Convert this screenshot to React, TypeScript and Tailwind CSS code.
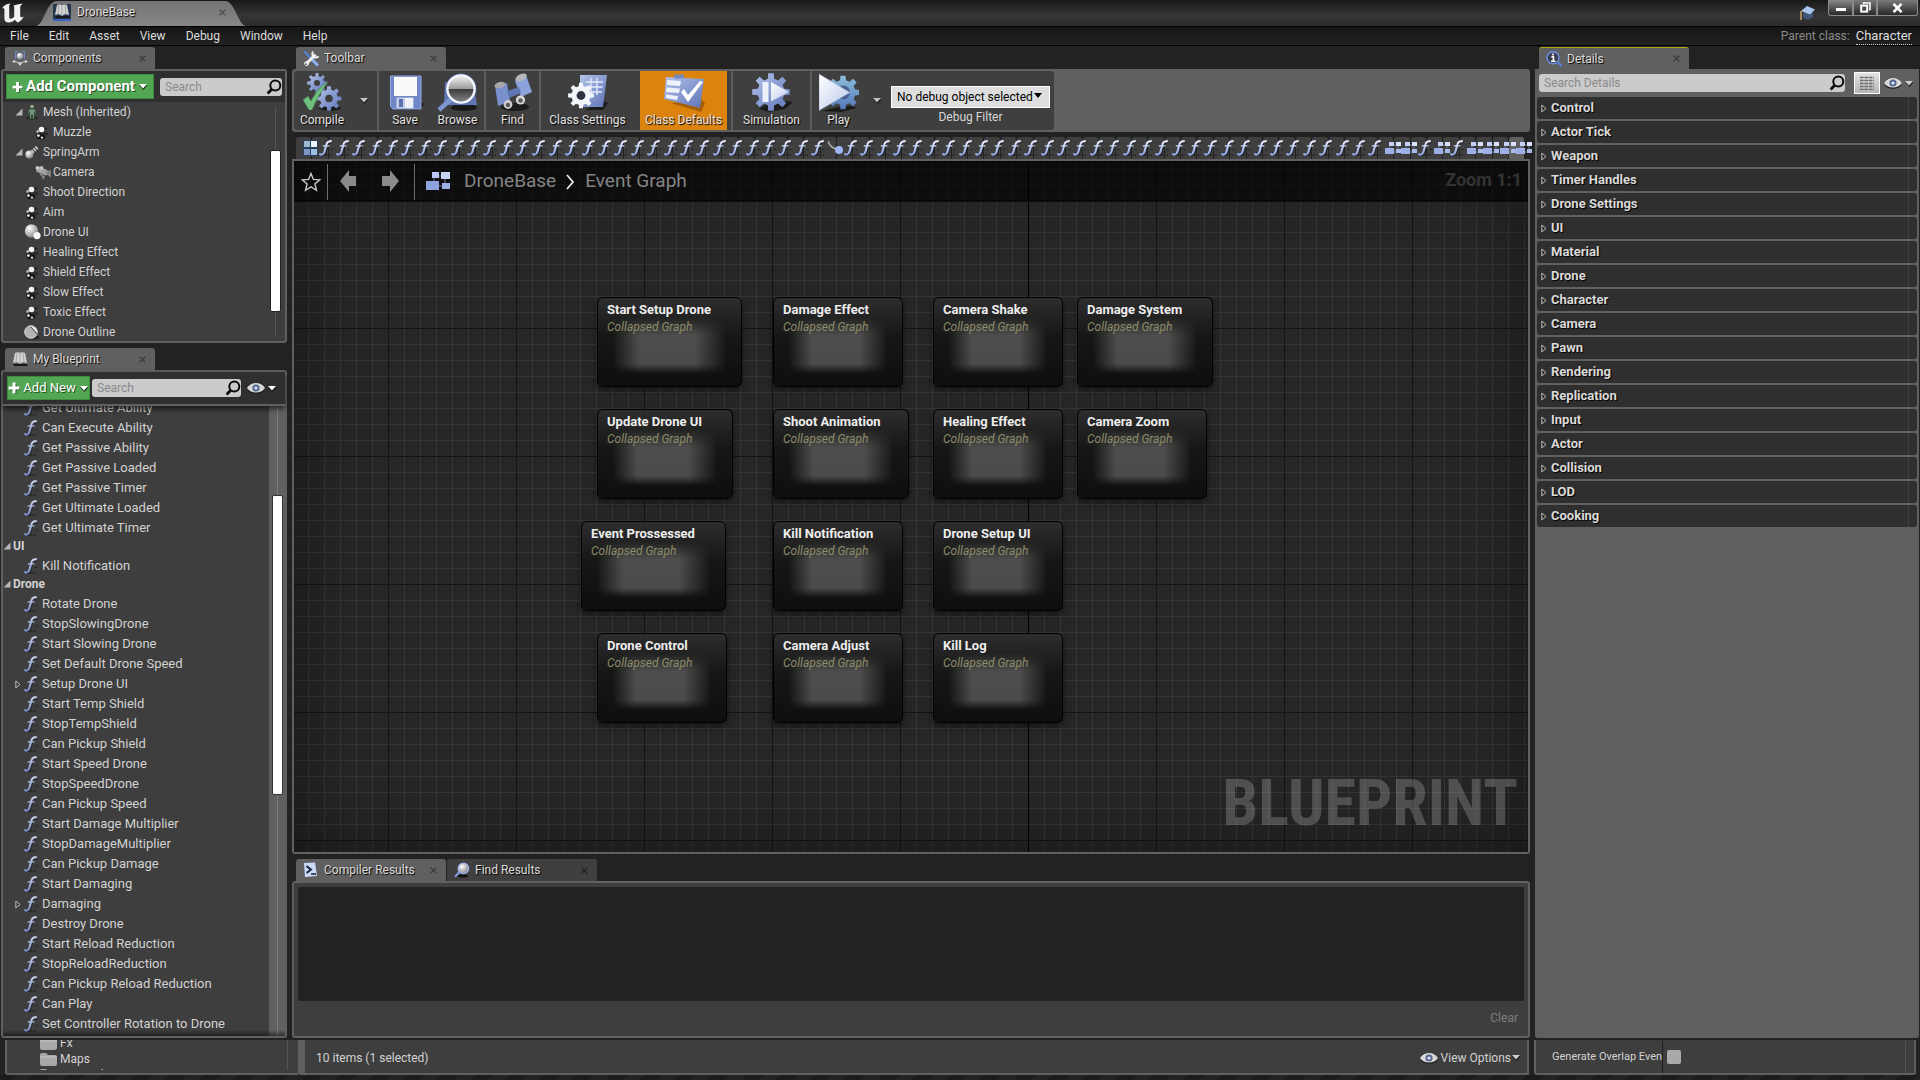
import React from "react";

const RB = "font-['Roboto','Liberation_Sans',sans-serif]";

function gear(cx: number, cy: number, ro: number, ri: number, n: number) {
  const pts: string[] = [];
  const step = (Math.PI * 2) / n;
  for (let i = 0; i < n; i++) {
    const a = i * step - Math.PI / 2;
    const corners: [number, number][] = [
      [ri, -0.3],
      [ro, -0.19],
      [ro, 0.19],
      [ri, 0.3],
    ];
    for (const [r, o] of corners) {
      const t = a + o * step;
      pts.push(`${(cx + r * Math.cos(t)).toFixed(2)} ${(cy + r * Math.sin(t)).toFixed(2)}`);
    }
  }
  return `M${pts.join("L")}Z`;
}

function Defs() {
  return (
    <svg width="0" height="0" className="absolute" aria-hidden="true">
      <defs>
        <linearGradient id="fn" x1="0" y1="0" x2="0" y2="16" gradientUnits="userSpaceOnUse">
          <stop offset="0" stopColor="#d3dcf0" />
          <stop offset="1" stopColor="#7288cc" />
        </linearGradient>
        <linearGradient id="fnb" x1="0" y1="0" x2="0" y2="16" gradientUnits="userSpaceOnUse">
          <stop offset="0" stopColor="#eef3ff" />
          <stop offset="1" stopColor="#8aa5ee" />
        </linearGradient>
        <linearGradient id="blue" x1="0" y1="0" x2="1" y2="1">
          <stop offset="0" stopColor="#b4c3ea" />
          <stop offset="1" stopColor="#5d74b8" />
        </linearGradient>
        <linearGradient id="pale" x1="0" y1="0" x2="1" y2="1">
          <stop offset="0" stopColor="#ffffff" />
          <stop offset="1" stopColor="#b9c8ea" />
        </linearGradient>
        <linearGradient id="teal" x1="0" y1="0" x2="0" y2="1">
          <stop offset="0" stopColor="#8cc0dc" />
          <stop offset="1" stopColor="#5577b8" />
        </linearGradient>
        <linearGradient id="glass" x1="0" y1="0" x2="0" y2="1">
          <stop offset="0" stopColor="#f4f4f4" />
          <stop offset="0.5" stopColor="#9a9a9a" />
          <stop offset="0.51" stopColor="#3c3c3c" />
          <stop offset="1" stopColor="#888888" />
        </linearGradient>
        <radialGradient id="ball" cx="0.35" cy="0.3" r="0.8">
          <stop offset="0" stopColor="#ffffff" />
          <stop offset="1" stopColor="#7a7a7a" />
        </radialGradient>
      </defs>
    </svg>
  );
}

function FnIcon({ bright = false }: { bright?: boolean }) {
  const s = bright ? "url(#fnb)" : "url(#fn)";
  return (
    <svg width="14" height="16" viewBox="0 0 14 16" fill="none" className="relative shrink-0">
      <path d="M6 15H13M11 9.5H14" stroke="#262626" strokeWidth="1.2" />
      <path d="M1 14.6C4.6 15.6 5.2 13 6 10L7.4 4.6C8 2 9 .9 12.6 1.7" stroke="#161616" strokeWidth="2" transform="translate(1 1)" opacity=".5" />
      <path d="M.6 13.2C1.2 15.2 4.4 15.4 5.4 11.8L7.6 4C8.2 1.8 9.8 .8 12.8 1.3" stroke={s} strokeWidth="2" />
      <path d="M3.8 5.9H10.4" stroke={s} strokeWidth="1.3" />
    </svg>
  );
}

function GraphIcon() {
  return (
    <svg width="16" height="13" viewBox="0 0 16 13" className="relative shrink-0">
      <path d="M6 3H12M13 3V9M8 10H12M5 8V3" stroke="#6b7794" strokeWidth="1" fill="none" />
      <rect x="4" y="0" width="5" height="4" fill="#c4d0f5" />
      <rect x="11" y="0" width="5" height="4" fill="#d9e2fb" />
      <rect x="0" y="6" width="9" height="6" fill="#9db0e6" />
      <rect x="11" y="7" width="5" height="4" fill="#a8b9ea" />
    </svg>
  );
}

function GridIcon() {
  return (
    <svg width="15" height="16" viewBox="0 0 15 16" className="relative shrink-0">
      <rect x="0" y="0" width="15" height="16" fill="#26405e" />
      <rect x="1" y="1" width="6" height="6" fill="#9db8d0" />
      <rect x="8" y="1" width="6" height="6" fill="#eaf2fb" />
      <rect x="1" y="9" width="6" height="6" fill="#7f95c4" />
      <rect x="8" y="9" width="6" height="6" fill="#9dc0e0" />
    </svg>
  );
}

function MacroIcon() {
  return (
    <svg width="16" height="16" viewBox="0 0 16 16" className="relative shrink-0">
      <path d="M0 1C2 7 5 9 10 9" stroke="#a9a9a9" strokeWidth="1.6" fill="none" />
      <circle cx="11" cy="10" r="4" fill="#9fb4f0" />
    </svg>
  );
}

function SceneIcon() {
  return (
    <svg width="14" height="15" viewBox="0 0 14 15" className="shrink-0">
      <ellipse cx="6" cy="11.5" rx="4.5" ry="3" fill="#161616" />
      <path d="M6 8L1 10M7 9V14M9 8L13 9M8 5L12 3" stroke="#1b1b1b" strokeWidth="1.4" />
      <circle cx="6.5" cy="4.5" r="2.8" fill="#f4f4f4" />
      <circle cx="2.6" cy="6.5" r="1.2" fill="#cfcfcf" />
      <circle cx="3.4" cy="10.6" r="1.4" fill="#e8e8e8" />
      <circle cx="7" cy="12.6" r="1.2" fill="#d8d8d8" />
      <circle cx="10" cy="8" r="1" fill="#333" />
    </svg>
  );
}

function MeshIcon() {
  return (
    <svg width="14" height="16" viewBox="0 0 14 16" className="shrink-0">
      <ellipse cx="7" cy="14" rx="6" ry="1.8" fill="#262626" />
      <circle cx="7" cy="2.6" r="1.9" fill="#8da892" />
      <path d="M4 5H10L11.5 10H10L9.4 8V15H7.6V11H6.4V15H4.6V8L4 10H2.5Z" fill="#6f8f78" stroke="#2c3c30" strokeWidth=".6" />
    </svg>
  );
}

function SpringIcon() {
  return (
    <svg width="14" height="14" viewBox="0 0 14 14" className="shrink-0">
      <path d="M7 7L12.5 2" stroke="#d8d8d8" strokeWidth="3.6" strokeDasharray="1.6 1.1" />
      <circle cx="4.4" cy="9.6" r="4" fill="url(#ball)" />
    </svg>
  );
}

function CameraIcon() {
  return (
    <svg width="17" height="15" viewBox="0 0 17 15" className="shrink-0">
      <path d="M2 4L5 1.500L13 4.500L15.500 8L12 11L2 7Z" fill="#a2a2a2" stroke="#303030" strokeWidth=".6" />
      <path d="M6 9L10 12L9 14M12 8L16 6V11Z" stroke="#8a8a8a" strokeWidth="1.5" fill="#777" />
      <circle cx="3.500" cy="3" r="2" fill="#c9c9c9" />
      <circle cx="7.500" cy="3" r="2" fill="#bdbdbd" />
    </svg>
  );
}

function WidgetIcon() {
  return (
    <svg width="17" height="16" viewBox="0 0 17 16" className="shrink-0">
      <circle cx="7.5" cy="7" r="6.7" fill="url(#ball)" />
      <circle cx="13" cy="11.6" r="3.6" fill="#f6f6f6" />
    </svg>
  );
}

function OutlineIcon() {
  return (
    <svg width="16" height="15" viewBox="0 0 16 15" className="shrink-0">
      <ellipse cx="9" cy="12.5" rx="6.5" ry="2" fill="#222" />
      <circle cx="7" cy="7" r="6.3" fill="#b4b4b4" stroke="#d5d5d5" strokeWidth="1" />
      <path d="M7 1A6.4 6.4 0 0 1 13 8L9 5Z" fill="#e8e8e8" />
      <path d="M7 2L13 9" stroke="#3a3a3a" strokeWidth="1" />
    </svg>
  );
}

function Magnifier() {
  return (
    <svg width="16" height="16" viewBox="0 0 16 16" fill="none" className="shrink-0">
      <circle cx="9.3" cy="6.4" r="5" stroke="#0a0a0a" strokeWidth="2" />
      <path d="M5.8 10.2L1.6 14.4" stroke="#0a0a0a" strokeWidth="2.8" />
    </svg>
  );
}

function Caret({ color = "#ffffff" }: { color?: string }) {
  return (
    <svg width="10" height="7" viewBox="0 0 10 7" className="shrink-0">
      <path d="M1 2H9.5L5.5 7Z" fill="#000" opacity=".7" />
      <path d="M1 1H9L5 5.4Z" fill={color} />
    </svg>
  );
}

function Eye() {
  return (
    <svg width="18" height="12" viewBox="0 0 18 12" className="shrink-0">
      <ellipse cx="9" cy="6.4" rx="8.8" ry="5.4" fill="#222" />
      <path d="M0 6C4 -.6 14 -.6 18 6C14 12 4 12 0 6Z" fill="#d9d9d9" />
      <circle cx="9" cy="6" r="3.6" fill="#56688f" />
      <circle cx="9" cy="6" r="1.6" fill="#dce6ff" />
    </svg>
  );
}

function Plus({ className = "" }: { className?: string }) {
  return (
    <svg width="12" height="12" viewBox="0 0 12 12" className={"shrink-0 " + className}>
      <path d="M7 2V12M2 7H12" stroke="#1d3d1e" strokeWidth="2.6" />
      <path d="M6 .6V11.4M.6 6H11.4" stroke="#fff" strokeWidth="3" />
    </svg>
  );
}

function Book({ size = 16 }: { size?: number }) {
  return (
    <svg width={size} height={size} viewBox="0 0 16 16" className="shrink-0">
      <path d="M1 13H15L15.6 15H2Z" fill="#181818" />
      <path d="M3 2C5 1 7 1 8 2C9 1 11 1 13 2L15 12C12 11 10 11 8 13C6 11 4 11 1 12Z" fill="#d2d2d2" />
      <path d="M8 2V12.6M5 2L4 11M11 2L12 11" stroke="#9a9a9a" strokeWidth=".8" />
    </svg>
  );
}

function ComponentsTabIcon() {
  return (
    <svg width="16" height="16" viewBox="0 0 16 16" className="shrink-0">
      <path d="M3 1.500H6M10 1.500H13M3.500 1V9M12.500 1V9" fill="none" stroke="#6f87b5" strokeWidth="1.2" />
      <circle cx="8" cy="6" r="3.6" fill="url(#ball)" stroke="#55688f" strokeWidth=".8" />
      <path d="M1 11L8 13L15 11" stroke="#c7c7c7" strokeWidth="1.2" fill="none" />
      <path d="M0 11.6L3 10V13ZM16 11.6L13 10V13ZM8 16L6 13H10Z" fill="#dedede" />
    </svg>
  );
}

function ToolsIcon() {
  return (
    <svg width="17" height="17" viewBox="0 0 17 17" fill="none" className="shrink-0">
      <path d="M1.5 1.5L8 8.5" stroke="#5b86e0" strokeWidth="2" />
      <path d="M9 9.5L15 15.5" stroke="#8fb2f5" strokeWidth="3" />
      <path d="M12.5 4.5L3.5 13.5" stroke="#f0f0f0" strokeWidth="3" />
      <path d="M10.2 1.6A3.6 3.6 0 1 0 15.6 6.4" stroke="#f0f0f0" strokeWidth="2" />
      <circle cx="3.6" cy="13.6" r="2.4" fill="#f0f0f0" />
      <circle cx="3" cy="14.2" r=".9" fill="#555" />
    </svg>
  );
}

function ResultsIcon() {
  return (
    <svg width="15" height="16" viewBox="0 0 15 16" fill="none" className="shrink-0">
      <path d="M1 1L12 .5L14 14L2 15Z" fill="#c9daf8" />
      <path d="M3.4 4L8 7.6L3.6 11" stroke="#1d2a45" strokeWidth="2" />
      <path d="M8 12H13" stroke="#1d2a45" strokeWidth="1.6" />
    </svg>
  );
}

function FindSmallIcon() {
  return (
    <svg width="16" height="16" viewBox="0 0 16 16" className="shrink-0">
      <ellipse cx="9" cy="14" rx="5" ry="1.6" fill="#111" />
      <path d="M5.5 10L1 14.6" stroke="#88a4ea" strokeWidth="2" />
      <circle cx="9.4" cy="6.4" r="5.2" fill="url(#ball)" stroke="#9db2ea" strokeWidth="1.4" />
    </svg>
  );
}

function InfoIcon() {
  return (
    <svg width="17" height="16" viewBox="0 0 17 16" className="shrink-0">
      <circle cx="7" cy="6.8" r="6" fill="#39404f" stroke="#6f90e4" strokeWidth="1.4" />
      <path d="M11.4 11L15.6 15" stroke="#5c80dc" strokeWidth="2.4" />
      <path d="M7 2.4V4.4M5.4 5.8H7.4V10M5 10.2H9.4" stroke="#fff" strokeWidth="1.6" fill="none" />
    </svg>
  );
}

function Logo() {
  return (
    <svg width="22" height="20" viewBox="0 0 22 20" className="shrink-0">
      <path
        d="M0 5.6C1.2 3 4 1 8.6 .6C7.4 1.6 7.2 2.4 7.2 4V13.4C7.2 15 7.8 15.8 8.8 15.8C10 15.8 11.2 15 12.2 13.8V4.6C12.2 3.4 11.8 2.8 10.8 2.8C13.6 1.8 16.6 .8 21 .4C19 1.6 18.2 3 18.2 4.8V12.6C18.2 14.4 18.8 14.8 21.8 13.4C20.2 16.8 18 18.4 15.4 19.6L12.8 16.8C11.2 18.6 9 19.6 6.6 19.6C3.8 19.6 2.4 17.8 2.4 15.2V6.6C2.4 5.2 1.6 4.8 0 5.6Z"
        fill="#f2f2f2"
      />
    </svg>
  );
}

function CompileIcon() {
  return (
    <svg width="40" height="40" viewBox="0 0 40 40">
      <ellipse cx="28" cy="35" rx="11" ry="3" fill="#1c1c1c" />
      <path d={gear(15, 10, 10, 7, 8)} fill="url(#blue)" />
      <circle cx="15" cy="10" r="3" fill="#3d3d3d" />
      <path d={gear(27, 25.5, 12.5, 9, 8)} fill="url(#blue)" />
      <circle cx="27" cy="25.5" r="3.8" fill="#3d3d3d" />
      <path d="M1 27L6 23L9 28C13 20 19 13 26 9C20 17 14 27 10 37H7Z" fill="#6fc07c" stroke="#3f7a49" strokeWidth=".6" />
    </svg>
  );
}

function SaveIcon() {
  return (
    <svg width="40" height="40" viewBox="0 0 40 40">
      <path d="M10 37H35L39 31L34 27Z" fill="#191919" />
      <path d="M5.500 3H36V36H8L5.500 33.500Z" fill="#7088c8" stroke="#94a9de" />
      <rect x="9" y="4" width="23" height="19" fill="#fafafa" />
      <rect x="11.500" y="24.500" width="17" height="11" fill="#c5cfe6" />
      <rect x="14" y="26" width="4" height="8" fill="#5a70b0" />
      <rect x="20" y="25" width="8" height="10" fill="#eef1f8" />
    </svg>
  );
}

function BrowseIcon() {
  return (
    <svg width="42" height="40" viewBox="0 0 42 40">
      <ellipse cx="27" cy="34.500" rx="13" ry="3.600" fill="#191919" />
      <path d="M8 9H36L40 32H7Z" fill="#6076b4" />
      <path d="M14 26L2 37" stroke="#7f95cf" strokeWidth="4.500" />
      <circle cx="24" cy="16" r="15.400" fill="#5d74b4" />
      <circle cx="24" cy="16" r="13.600" fill="url(#glass)" stroke="#f3f6ff" strokeWidth="2.400" />
    </svg>
  );
}

function FindIcon() {
  return (
    <svg width="40" height="40" viewBox="0 0 40 40">
      <ellipse cx="22" cy="34" rx="14" ry="4" fill="#1c1c1c" />
      <path d="M2 13L14 10L17 28L5 33Z" fill="#7890cc" />
      <path d="M22 8L33 2L39 19L28 24Z" fill="#8ba2da" />
      <path d="M14 18L26 14L28 20L16 25Z" fill="#5f76b4" />
      <ellipse cx="7" cy="12" rx="5.500" ry="3" fill="#a7a7a7" transform="rotate(-12 7 12)" />
      <ellipse cx="28" cy="4.500" rx="6" ry="3.200" fill="#b7b7b7" transform="rotate(-26 28 4.500)" />
      <circle cx="15" cy="31.500" r="4.400" fill="#cfcfcf" />
      <circle cx="15" cy="32" r="2.200" fill="#5a5a5a" />
      <circle cx="27.500" cy="27" r="4.600" fill="#d8d8d8" />
      <circle cx="27.500" cy="27.500" r="2.300" fill="#5a5a5a" />
    </svg>
  );
}

function ClassSettingsIcon() {
  return (
    <svg width="42" height="40" viewBox="0 0 42 40">
      <path d="M18 37H36L41 30L36 28Z" fill="#1a1a1a" />
      <path d="M13 2H40L36 34H13Z" fill="url(#blue)" />
      <path d="M19 9H36M18 14H35.500M18 19H35M24 5V22M30 5V22" stroke="#e4ebfa" strokeWidth="1.300" />
      <path d={gear(14, 22.500, 13, 9.600, 8)} fill="#f3f6fb" />
      <circle cx="14" cy="22.500" r="4.400" fill="#2e3442" />
    </svg>
  );
}

function ClassDefaultsIcon() {
  return (
    <svg width="42" height="40" viewBox="0 0 42 40">
      <path d="M8 30L38 39L42 30L38 26Z" fill="#a45f06" />
      <path d="M3 4L41 6L37 35L1 26Z" fill="url(#blue)" />
      <rect x="11" y="1.500" width="10" height="4" rx="1" fill="#7789b8" />
      <path d="M4 7L18 8L17 13L4 12ZM3.500 14.500L17 15.500L16 20L3 19ZM3 21.500L15 23L14 27L3 25Z" fill="#eef2fa" />
      <path d="M18 19L21 16L25 22L37 8L40 9L25 29Z" fill="#ffffff" />
    </svg>
  );
}

function SimulationIcon() {
  return (
    <svg width="42" height="40" viewBox="0 0 42 40">
      <path d="M8 36L18 30L34 28L42 29L34 36L18 39Z" fill="#1b1b1b" />
      <path d={gear(20, 19, 19, 13.600, 8)} fill="url(#blue)" />
      <rect x="11.500" y="9" width="6" height="20" fill="#eef3fb" />
      <path d="M20 9L38 19L20 28.500Z" fill="url(#pale)" />
    </svg>
  );
}

function PlayIcon() {
  return (
    <svg width="40" height="40" viewBox="0 0 40 40">
      <path d="M2 38L20 34L32 33L38 35L22 39Z" fill="#1b1b1b" />
      <path d={gear(24, 19.500, 17, 12.500, 8)} fill="url(#teal)" />
      <circle cx="24" cy="19.500" r="7" fill="#46608f" />
      <path d="M0 1L31 19.500L0 37.500Z" fill="url(#pale)" stroke="#9fb0d8" strokeWidth=".6" />
    </svg>
  );
}

const SHADOW = "[text-shadow:1px_1px_1px_#000]";

function CloseX({ color = "#383838" }: { color?: string }) {
  return (
    <svg width="7" height="7" viewBox="0 0 7 7">
      <path d="M.6 .6L6.400 6.400M6.400 .6L.6 6.400" stroke={color} strokeWidth="1.200" />
    </svg>
  );
}

function Tab({
  icon,
  label,
  active = true,
  accent = false,
}: {
  icon: React.ReactNode;
  label: string;
  active?: boolean;
  accent?: boolean;
}) {
  return (
    <div
      className={
        "flex h-[22px] w-[150px] items-center rounded-t-[3px] pr-2 pl-[7px] " +
        (active ? "bg-[#606060] " : "bg-[#3f3f3f] ") +
        (accent ? "border-t border-[#b5a51c]" : "")
      }
    >
      <span className="flex w-[21px] shrink-0 items-center">{icon}</span>
      <span className={"flex-1 truncate text-xs text-[#dcdcdc] " + SHADOW}>{label}</span>
      <button type="button" aria-label={"Close " + label} className="flex size-[10px] items-center justify-center">
        <CloseX color={active ? "#383838" : "#1f1f1f"} />
      </button>
    </div>
  );
}

function SearchBox({ label, className }: { label: string; className: string }) {
  return (
    <label className={"flex h-[18px] items-center rounded-[3px] bg-[#cbcbcb] pl-[5px] " + className}>
      <input
        type="text"
        aria-label={label}
        placeholder={label}
        className="h-full w-full min-w-0 flex-1 bg-transparent text-xs text-black outline-none placeholder:text-[#8a8a8a]"
      />
      <Magnifier />
    </label>
  );
}

function TitleBar() {
  return (
    <header className="flex h-[26px] items-stretch bg-linear-to-b from-[#181818] via-[#363636] via-60% to-[#2b2b2b]">
      <div className="flex w-9 items-center pl-[2px]">
        <Logo />
      </div>
      <div className="relative mt-px flex w-[210px] items-center pb-[3px]">
        <svg className="absolute inset-0 size-full" viewBox="0 0 210 25" preserveAspectRatio="none">
          <defs>
            <linearGradient id="tab" x1="0" y1="0" x2="0" y2="1">
              <stop offset="0" stopColor="#747474" />
              <stop offset="1" stopColor="#868686" />
            </linearGradient>
          </defs>
          <path d="M0 25C9 23 10 0 21 0H189C199 0 202 24 210 25Z" fill="url(#tab)" />
        </svg>
        <span className="relative ml-[17px] flex h-[17px] w-[18px] items-center justify-center border-b-2 border-[#3a62c4] bg-[#26364e]">
          <Book size={16} />
        </span>
        <span className={"relative ml-[6px] flex-1 text-xs text-[#dedede] " + SHADOW}>DroneBase</span>
        <button type="button" aria-label="Close DroneBase" className="relative mr-[20px]">
          <CloseX color="#4a4a4a" />
        </button>
      </div>
      <div className="flex-1" />
      <button type="button" aria-label="Tutorials" className="mr-[12px]">
        <svg width="17" height="15" viewBox="0 0 17 15">
          <path d="M4 7V12L9 14L14 11V6Z" fill="#3f5573" />
          <path d="M8 0L16 3.500L11 8.500L2 5Z" fill="#a6c6ee" />
          <path d="M2 5V14" stroke="#c9a56c" strokeWidth="1.500" />
        </svg>
      </button>
      <div className="mr-[2px] flex h-4 text-white">
        <button type="button" aria-label="Minimize" className="flex w-[25px] items-end justify-center rounded-bl-[3px] border border-t-0 border-[#8b8b8b] bg-linear-to-b from-[#8a8a8a] to-[#2a2a2a] pb-[4px]">
          <span className="h-[3px] w-[10px] bg-white" />
        </button>
        <button type="button" aria-label="Restore" className="flex w-6 items-center justify-center border border-t-0 border-[#8b8b8b] bg-linear-to-b from-[#7a7a7a] to-[#2a2a2a]">
          <svg width="11" height="11" viewBox="0 0 11 11" fill="none">
            <path d="M3.500 2V1H10V7.500H9" stroke="#fff" strokeWidth="1.500" />
            <rect x="1.200" y="3.600" width="6" height="6" stroke="#fff" strokeWidth="2" />
          </svg>
        </button>
        <button type="button" aria-label="Close" className="flex w-[41px] items-center justify-center rounded-br-[3px] border border-t-0 border-[#8b8b8b] bg-linear-to-b from-[#7a7a7a] to-[#2a2a2a]">
          <svg width="11" height="10" viewBox="0 0 11 10">
            <path d="M1.500 .8L9.500 9.200M9.500 .8L1.500 9.200" stroke="#fff" strokeWidth="2.600" />
          </svg>
        </button>
      </div>
    </header>
  );
}

const MENUS = ["File", "Edit", "Asset", "View", "Debug", "Window", "Help"];

function MenuBar() {
  return (
    <nav className="flex h-5 items-center border-y border-black bg-linear-to-b from-[#151515] to-[#222222] pr-2 pl-[10px] text-xs">
      <div className="flex gap-5">
        {MENUS.map((m) => (
          <button key={m} type="button" className="text-[#dcdcdc]">
            {m}
          </button>
        ))}
      </div>
      <div className="ml-auto flex items-center gap-[6px]">
        <span className="text-[#8a8a8a]">Parent class:</span>
        <a href="#character" className="border-b border-dotted border-[#cfcfcf] text-[13px] leading-4 text-[#dedede]">
          Character
        </a>
      </div>
    </nav>
  );
}

type Comp = { label: string; icon: React.ReactNode; depth: number; open?: boolean };
const COMPONENTS: Comp[] = [
  { label: "Mesh (Inherited)", icon: <MeshIcon />, depth: 0, open: true },
  { label: "Muzzle", icon: <SceneIcon />, depth: 1 },
  { label: "SpringArm", icon: <SpringIcon />, depth: 0, open: true },
  { label: "Camera", icon: <CameraIcon />, depth: 1 },
  { label: "Shoot Direction", icon: <SceneIcon />, depth: 0 },
  { label: "Aim", icon: <SceneIcon />, depth: 0 },
  { label: "Drone UI", icon: <WidgetIcon />, depth: 0 },
  { label: "Healing Effect", icon: <SceneIcon />, depth: 0 },
  { label: "Shield Effect", icon: <SceneIcon />, depth: 0 },
  { label: "Slow Effect", icon: <SceneIcon />, depth: 0 },
  { label: "Toxic Effect", icon: <SceneIcon />, depth: 0 },
  { label: "Drone Outline", icon: <OutlineIcon />, depth: 0 },
];

function OpenArrow() {
  return (
    <svg width="8" height="8" viewBox="0 0 8 8" className="shrink-0">
      <path d="M7.500 .5V7.500H.5Z" fill="#b5b5b5" />
    </svg>
  );
}

function ClosedArrow() {
  return (
    <svg width="6" height="9" viewBox="0 0 6 9" className="shrink-0" fill="none">
      <path d="M.8 1V8L5 4.500Z" stroke="#b8b8b8" strokeWidth="1" />
    </svg>
  );
}

function ComponentsPanel() {
  return (
    <section>
      <div className="pl-1">
        <Tab icon={<ComponentsTabIcon />} label="Components" />
      </div>
      <div className="rounded-[3px] border-2 border-[#606060] bg-[#3e3e3e]">
        <div className="flex h-[31px] items-center gap-[6px] bg-[#2f2f2f] px-[3px]">
          <button type="button" className="flex h-[25px] w-[148px] items-center justify-center gap-[3px] border border-[#3d8a3f] bg-[#53a653] text-[15px] font-bold text-white [text-shadow:1px_1px_0_#244d25]">
            <Plus className="w-[11px]" />
            Add Component
            <Caret />
          </button>
          <SearchBox label="Search" className="flex-1" />
        </div>
        <div className="flex">
          <ul className="h-[239px] flex-1 overflow-hidden text-xs text-[#d2d2d2]">
            {COMPONENTS.map((c) => (
              <li key={c.label} className={"flex h-5 items-center " + (c.depth ? "pl-[22px]" : "pl-3")}>
                <span className="w-2">{c.open && <OpenArrow />}</span>
                <span className="mr-[2px] flex w-[18px] justify-center">{c.icon}</span>
                {c.label}
              </li>
            ))}
          </ul>
          <div className="flex w-5 justify-center py-1">
            <div className="relative w-px bg-[#555555]">
              <div className="absolute top-[44px] -left-[5px] h-[162px] w-[11px] rounded-[2px] border border-[#222] bg-white" />
            </div>
          </div>
        </div>
      </div>
    </section>
  );
}

type Row = { label: string; kind?: "cat" | "group" };
const FUNCS: Row[] = [
  { label: "Get Ultimate Ability" },
  { label: "Can Execute Ability" },
  { label: "Get Passive Ability" },
  { label: "Get Passive Loaded" },
  { label: "Get Passive Timer" },
  { label: "Get Ultimate Loaded" },
  { label: "Get Ultimate Timer" },
  { label: "UI", kind: "cat" },
  { label: "Kill Notification" },
  { label: "Drone", kind: "cat" },
  { label: "Rotate Drone" },
  { label: "StopSlowingDrone" },
  { label: "Start Slowing Drone" },
  { label: "Set Default Drone Speed" },
  { label: "Setup Drone UI", kind: "group" },
  { label: "Start Temp Shield" },
  { label: "StopTempShield" },
  { label: "Can Pickup Shield" },
  { label: "Start Speed Drone" },
  { label: "StopSpeedDrone" },
  { label: "Can Pickup Speed" },
  { label: "Start Damage Multiplier" },
  { label: "StopDamageMultiplier" },
  { label: "Can Pickup Damage" },
  { label: "Start Damaging" },
  { label: "Damaging", kind: "group" },
  { label: "Destroy Drone" },
  { label: "Start Reload Reduction" },
  { label: "StopReloadReduction" },
  { label: "Can Pickup Reload Reduction" },
  { label: "Can Play" },
  { label: "Set Controller Rotation to Drone" },
];

function BlueprintPanel() {
  return (
    <section className="mt-[5px] flex min-h-0 flex-1 flex-col">
      <div className="pl-1">
        <Tab icon={<Book />} label="My Blueprint" />
      </div>
      <div className="flex min-h-0 flex-1 flex-col rounded-[3px] border-2 border-[#606060] bg-[#3e3e3e]">
        <div className="z-10 flex h-[34px] shrink-0 items-center border-b-2 border-[#606060] bg-[#2f2f2f] px-1 shadow-[0_3px_5px_rgba(0,0,0,0.6)]">
          <button type="button" className="flex h-6 w-[83px] items-center justify-center gap-[3px] border border-[#3d8a3f] bg-[#53a653] text-[13px] text-white [text-shadow:1px_1px_0_#244d25]">
            <Plus />
            Add New
            <Caret />
          </button>
          <SearchBox label="Search" className="ml-[2px] w-[149px]" />
          <button type="button" aria-label="View options" className="ml-[6px] flex items-center gap-[2px]">
            <Eye />
            <Caret />
          </button>
        </div>
        <div className="relative flex min-h-0 flex-1 overflow-hidden">
          <ul className="-mt-2 flex-1 text-[13px] text-[#d2d2d2]">
            {FUNCS.map((f) =>
              f.kind === "cat" ? (
                <li key={f.label} className="flex h-[18px] items-center gap-[2px] pb-[2px] text-xs font-bold">
                  <OpenArrow />
                  {f.label}
                </li>
              ) : (
                <li key={f.label} className="flex h-5 items-center pl-3">
                  <span className="w-[9px]">{f.kind === "group" && <ClosedArrow />}</span>
                  <FnIcon />
                  <span className="ml-1 whitespace-nowrap">{f.label}</span>
                </li>
              ),
            )}
          </ul>
          <div className="flex w-4 justify-center bg-[#606060]">
            <div className="relative w-px bg-[#7c7c7c]">
              <div className="absolute top-[89px] -left-[5px] h-[300px] w-[11px] rounded-[2px] border border-[#333] bg-white" />
            </div>
          </div>
          <div className="absolute inset-x-0 bottom-0 h-[6px] bg-linear-to-b from-transparent to-black/50" />
        </div>
      </div>
    </section>
  );
}

function ToolButton({ icon, label, className, active = false }: { icon: React.ReactNode; label: string; className: string; active?: boolean }) {
  return (
    <button type="button" className={"flex flex-col items-center pt-[2px] " + (active ? "bg-[#dc830e] " : "") + className}>
      <span className="flex h-10 items-center justify-center">{icon}</span>
      <span className={"text-xs leading-[14px] whitespace-nowrap text-[#e2e2e2] " + SHADOW}>{label}</span>
    </button>
  );
}

function Sep() {
  return <div className="w-[2px] shrink-0 bg-[#5c5c5c]" />;
}

function Toolbar() {
  return (
    <section>
      <div className="pl-1">
        <Tab icon={<ToolsIcon />} label="Toolbar" />
      </div>
      <div className="flex h-[63px] rounded-[3px] bg-[#606060] p-[2px]">
        <div className="flex rounded-[3px] bg-[#3f3f3f] pr-1">
          <ToolButton icon={<CompileIcon />} label="Compile" className="w-14" />
          <button type="button" aria-label="Compile options" className="flex w-[27px] items-center justify-center">
            <Caret color="#c4c4c4" />
          </button>
          <Sep />
          <ToolButton icon={<SaveIcon />} label="Save" className="w-[52px]" />
          <ToolButton icon={<BrowseIcon />} label="Browse" className="w-[53px]" />
          <Sep />
          <ToolButton icon={<FindIcon />} label="Find" className="w-[53px]" />
          <Sep />
          <ToolButton icon={<ClassSettingsIcon />} label="Class Settings" className="mr-[6px] w-[93px]" />
          <ToolButton icon={<ClassDefaultsIcon />} label="Class Defaults" className="mr-1 w-[87px]" active />
          <Sep />
          <ToolButton icon={<SimulationIcon />} label="Simulation" className="w-[77px]" />
          <Sep />
          <ToolButton icon={<PlayIcon />} label="Play" className="w-[53px]" />
          <button type="button" aria-label="Play options" className="flex w-6 items-center justify-center">
            <Caret color="#c4c4c4" />
          </button>
          <div className="ml-[2px] flex w-[159px] flex-col items-center pt-[13px]">
            <div className="relative w-full">
              <select
                id="debug-object"
                className="h-[22px] w-full appearance-none border border-white bg-[#dedede] pl-[5px] text-xs text-black"
                defaultValue="none"
              >
                <option value="none">No debug object selected</option>
              </select>
              <svg width="8" height="5" viewBox="0 0 8 5" className="pointer-events-none absolute top-[9px] right-2">
                <path d="M0 0H8L4 5Z" fill="#000" />
              </svg>
            </div>
            <label htmlFor="debug-object" className="mt-[2px] text-xs leading-[14px] text-[#d6d6d6]">
              Debug Filter
            </label>
          </div>
        </div>
      </div>
    </section>
  );
}

const TAB_KINDS: string[] = [
  "grid",
  ...Array.from({ length: 65 }, (_, i) => (i === 31 ? "macro" : "fn")),
  "graph",
  "graph",
  "fn",
  "graph",
  "fn",
  "graph",
  "graph",
  "graph",
  "active",
];

function DocTabs() {
  return (
    <div className="mt-[5px] flex h-[22px] pr-[5px] pl-1">
      {TAB_KINDS.map((k, i) => (
        <button
          key={i}
          type="button"
          aria-label={"Document " + (i + 1)}
          className={
            "flex min-w-0 flex-1 items-center rounded-t-[3px] border-r border-[#222] pl-[7px] " +
            (k === "active" ? "bg-[#606060]" : "bg-[#3f3f3f]")
          }
        >
          {k === "grid" ? <GridIcon /> : k === "macro" ? <MacroIcon /> : k === "fn" ? <FnIcon bright /> : <GraphIcon />}
        </button>
      ))}
    </div>
  );
}

type GNode = { t: string; x: string; y: string; w: string };
const X0 = "left-[303px]";
const X1 = "left-[479px]";
const X2 = "left-[639px]";
const X3 = "left-[783px]";
const Y0 = "top-[136px]";
const Y1 = "top-[248px]";
const Y2 = "top-[360px]";
const Y3 = "top-[472px]";
const NODES: GNode[] = [
  { t: "Start Setup Drone", x: X0, y: Y0, w: "w-[145px]" },
  { t: "Damage Effect", x: X1, y: Y0, w: "w-[130px]" },
  { t: "Camera Shake", x: X2, y: Y0, w: "w-[130px]" },
  { t: "Damage System", x: X3, y: Y0, w: "w-[136px]" },
  { t: "Update Drone UI", x: X0, y: Y1, w: "w-[136px]" },
  { t: "Shoot Animation", x: X1, y: Y1, w: "w-[136px]" },
  { t: "Healing Effect", x: X2, y: Y1, w: "w-[130px]" },
  { t: "Camera Zoom", x: X3, y: Y1, w: "w-[130px]" },
  { t: "Event Prossessed", x: "left-[287px]", y: Y2, w: "w-[145px]" },
  { t: "Kill Notification", x: X1, y: Y2, w: "w-[130px]" },
  { t: "Drone Setup UI", x: X2, y: Y2, w: "w-[130px]" },
  { t: "Drone Control", x: X0, y: Y3, w: "w-[130px]" },
  { t: "Camera Adjust", x: X1, y: Y3, w: "w-[130px]" },
  { t: "Kill Log", x: X2, y: Y3, w: "w-[130px]" },
];

function GraphNode({ n }: { n: GNode }) {
  return (
    <div
      className={
        "absolute h-[90px] rounded-[6px] border border-black bg-linear-to-b from-[#2d2d2d] via-[#151715] via-45% to-[#0d0f0d] px-[9px] pt-[4px] shadow-[0_3px_6px_rgba(0,0,0,0.5)] " +
        n.x + " " + n.y + " " + n.w
      }
    >
      <div className="absolute inset-x-[14px] top-[19px] bottom-3 bg-linear-to-b from-[#505050] to-[#484a48] blur-[2px] [mask-composite:intersect] [mask-image:linear-gradient(to_right,transparent,#000_24%,#000_72%,transparent),linear-gradient(to_bottom,transparent,#000_32%,#000_82%,transparent)]" />
      <div className="relative text-[13px] leading-4 font-bold whitespace-nowrap text-[#eeeeee]">{n.t}</div>
      <div className="relative mt-px text-xs leading-4 whitespace-nowrap text-[#8b8b66] italic">Collapsed Graph</div>
    </div>
  );
}

function Graph() {
  return (
    <section className="flex min-h-0 flex-1 rounded-b-[3px] border-2 border-[#606060]">
      <div className="relative flex-1 overflow-hidden bg-[#262626]">
        <div className="absolute inset-0 bg-[linear-gradient(to_right,#353535_1px,transparent_1px),linear-gradient(to_bottom,#353535_1px,transparent_1px)] bg-[length:16px_16px] bg-[position:14px_7px]" />
        <div className="absolute inset-0 bg-[linear-gradient(to_right,#141414_1px,transparent_1px),linear-gradient(to_bottom,#141414_1px,transparent_1px)] bg-[length:128px_128px] bg-[position:94px_39px]" />
        <div className="absolute inset-y-0 left-[734px] w-px bg-black" />
        <div className="absolute inset-0 shadow-[inset_0_0_70px_rgba(0,0,0,0.45)]" />
        {NODES.map((n) => (
          <GraphNode key={n.t} n={n} />
        ))}
        <div className="absolute right-[10px] bottom-[16px] font-['Roboto_Condensed','Roboto',sans-serif] text-[64px] leading-[64px] font-bold text-white/20">
          BLUEPRINT
        </div>
        <div className="relative flex h-[41px] items-center bg-black/60">
          <button type="button" aria-label="Favorite" className="flex w-[33px] justify-center">
            <svg width="20" height="20" viewBox="0 0 20 20" fill="none">
              <path d="M10 1.500L12.400 7.400L18.800 7.900L13.900 12L15.500 18.300L10 14.900L4.500 18.300L6.100 12L1.200 7.900L7.600 7.400Z" stroke="#c8c8c8" strokeWidth="1.400" />
            </svg>
          </button>
          <div className="h-9 w-px bg-[#6e6e6e]" />
          <button type="button" aria-label="Back" className="ml-3">
            <svg width="17" height="24" viewBox="0 0 17 24">
              <path d="M0 11L9 0V6H16V16H9V22Z" fill="#8a8a8a" />
            </svg>
          </button>
          <button type="button" aria-label="Forward" className="ml-[25px]">
            <svg width="18" height="24" viewBox="0 0 18 24">
              <path d="M17 11L8 0V6H0V16H8V22Z" fill="#8a8a8a" />
            </svg>
          </button>
          <div className="ml-[14px] h-9 w-px bg-[#6e6e6e]" />
          <svg width="24" height="19" viewBox="0 0 24 19" className="ml-[11px]">
            <path d="M10 4H20M19 4V14M12 14H20M8 12V4" stroke="#6b7794" strokeWidth="1" fill="none" />
            <rect x="6" y="0" width="7" height="6" fill="#b9c8f2" />
            <rect x="15" y="0" width="9" height="7" fill="#c9d5f8" />
            <rect x="0" y="9" width="13" height="9" fill="#8ea3de" />
            <rect x="16" y="11" width="8" height="6" fill="#9db0e6" />
          </svg>
          <div className="ml-[14px] flex items-center text-[19px] text-[#858585]">
            DroneBase
            <svg width="9" height="16" viewBox="0 0 9 16" fill="none" className="mx-[10px]">
              <path d="M1 1L7 8L1 15" stroke="#e8e8e8" strokeWidth="1.800" />
            </svg>
            Event Graph
          </div>
          <div className="mr-[6px] ml-auto pb-1 text-lg font-bold text-[#333333]">Zoom 1:1</div>
        </div>
      </div>
    </section>
  );
}

function Results() {
  return (
    <section className="mt-[5px]">
      <div className="flex gap-px pl-1">
        <Tab icon={<ResultsIcon />} label="Compiler Results" />
        <Tab icon={<FindSmallIcon />} label="Find Results" active={false} />
      </div>
      <div className="rounded-[3px] border-2 border-[#606060] bg-[#3e3e3e] px-1 pt-1">
        <div className="h-[114px] rounded-[2px] bg-[#222222]" />
        <div className="flex h-[35px] items-center justify-end pr-[6px] pb-[2px] text-xs text-[#7e7e7e]">
          <button type="button">Clear</button>
        </div>
      </div>
    </section>
  );
}

const CATEGORIES = [
  "Control", "Actor Tick", "Weapon", "Timer Handles", "Drone Settings", "UI", "Material", "Drone", "Character",
  "Camera", "Pawn", "Rendering", "Replication", "Input", "Actor", "Collision", "LOD", "Cooking",
];

function Details() {
  return (
    <aside className="flex w-[384px] shrink-0 flex-col">
      <div className="pl-1">
        <Tab icon={<InfoIcon />} label="Details" accent />
      </div>
      <div className="flex-1 rounded-b-[3px] bg-[#606060] px-[2px] pt-[2px]">
        <div className="flex h-[26px] items-start pt-px pl-[2px]">
          <SearchBox label="Search Details" className="mt-[2px] flex-1" />
          <button type="button" aria-label="Property matrix" className="ml-[9px] flex h-[22px] w-[26px] items-center justify-center border border-white bg-linear-to-b from-[#e4e4e4] to-[#b4b4b4]">
            <svg width="14" height="14" viewBox="0 0 14 14">
              <path d="M0 1.500H14M0 4.500H14M0 7.500H14M0 10.500H14M0 13.500H14" stroke="#6a6a6a" strokeWidth="1.600" strokeDasharray="3.600 .8" />
            </svg>
          </button>
          <button type="button" aria-label="View options" className="mt-[5px] mr-[3px] ml-1 flex items-center gap-[2px]">
            <Eye />
            <Caret color="#d0d0d0" />
          </button>
        </div>
        <div className="relative flex flex-col gap-[2px]">
          {CATEGORIES.map((c) => (
            <button key={c} type="button" className="flex h-[22px] items-center gap-1 rounded-[3px] bg-[#2f2f2f] pl-1 text-left">
              <ClosedArrow />
              <span className={"text-[13px] font-bold text-[#dadada] " + SHADOW}>{c}</span>
            </button>
          ))}
          <div className="absolute inset-y-0 right-2 w-px bg-white/8" />
        </div>
      </div>
    </aside>
  );
}

function Folder() {
  return (
    <svg width="17" height="13" viewBox="0 0 17 13" className="shrink-0">
      <path d="M0 2Q0 0 2 0H6L8 2H15Q17 2 17 4V11Q17 13 15 13H2Q0 13 0 11Z" fill="#a8a8a8" />
      <path d="M0 4H17" stroke="#c8c8c8" />
    </svg>
  );
}

function BottomStrip() {
  return (
    <footer className="mt-[2px] flex h-10 shrink-0 flex-col bg-[#222]">
      <div className="flex h-[35px] pr-1 pl-[5px] text-xs text-[#d2d2d2]">
        <div className="w-[295px] overflow-hidden rounded-b-[3px] border-x-2 border-b-2 border-[#606060] bg-[#3e3e3e]">
          <div className="flex h-[30px] overflow-hidden">
            <ul className="-mt-[5px] flex-1">
              {["Fx", "Maps", "Materials"].map((f) => (
                <li key={f} className="flex h-4 items-center gap-[3px] pl-[33px] leading-4">
                  <Folder />
                  {f}
                </li>
              ))}
            </ul>
            <div className="mr-[10px] w-px bg-[#555]" />
          </div>
        </div>
        <div className="flex flex-1 items-center justify-between border-r-2 border-b-2 border-l-[5px] border-[#606060] bg-[#3e3e3e] pt-[2px] pr-[6px] pl-[11px]">
          <span>10 items (1 selected)</span>
          <button type="button" className="flex items-center gap-[3px]">
            <Eye />
            <span className="flex items-center">
              View Options
              <Caret color="#d0d0d0" />
            </span>
          </button>
        </div>
        <div className="ml-[5px] flex w-[382px] rounded-b-[3px] border-x-2 border-b-2 border-[#606060] bg-[#3e3e3e] pt-px">
          <label htmlFor="overlap" className="w-[127px] overflow-hidden border-r border-[#1c1c1c] pl-4 text-[11px] leading-8 whitespace-nowrap">
            Generate Overlap Events
          </label>
          <input id="overlap" type="checkbox" className="mt-[9px] ml-1 size-[14px] appearance-none rounded-[2px] bg-[#a9a9a9]" />
          <div className="mr-2 ml-auto w-px bg-[#555]" />
        </div>
      </div>
      <div className="flex-1 bg-[repeating-linear-gradient(135deg,#1b1b1b_0_12px,#232323_12px_24px)]" />
    </footer>
  );
}

export default function App() {
  return (
    <div className={"flex h-screen flex-col overflow-hidden bg-[#222222] " + RB}>
      <Defs />
      <TitleBar />
      <MenuBar />
      <main className="flex min-h-0 flex-1 gap-[5px] pt-px pr-px pl-px">
        <div className="flex w-[286px] shrink-0 flex-col">
          <ComponentsPanel />
          <BlueprintPanel />
        </div>
        <div className="flex min-w-0 flex-1 flex-col">
          <Toolbar />
          <DocTabs />
          <Graph />
          <Results />
        </div>
        <Details />
      </main>
      <BottomStrip />
    </div>
  );
}
